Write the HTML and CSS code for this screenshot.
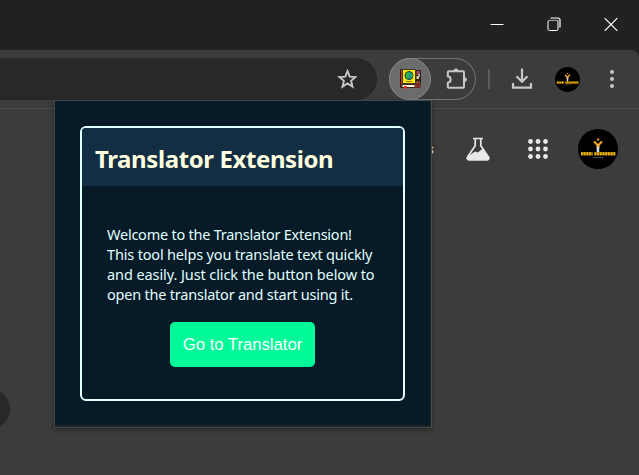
FILE: index.html
```html
<!DOCTYPE html>
<html lang="en">
<head>
<meta charset="utf-8">
<title>Translator Extension</title>
<link rel="stylesheet" href="styles.css">
</head>
<body>
<svg class="defs" width="0" height="0">
  <symbol id="avatar" viewBox="0 0 40 40">
    <circle cx="20" cy="20" r="20" fill="#000"/>
    <circle cx="20" cy="10.500" r="1.500" fill="#a87224"/>
    <path d="M16 12.500l4 4 4-4" fill="none" stroke="#f0a51c" stroke-width="2.200"/>
    <path d="M20 15v4" stroke="#f0b040" stroke-width="3"/>
    <path d="M20 18v5" stroke="#d5dfe8" stroke-width="2.500"/>
    <path d="M3 24.800h11.500m2 0h21" stroke="#7d5c08" stroke-width="3.600"/>
    <path d="M3 24.800h11.500m2 0h21" stroke="#f4b808" stroke-width="3" stroke-dasharray="1.700 1"/>
    <path d="M15 28.500h10" stroke="#555" stroke-width="1"/>
  </symbol>
</svg>
<div class="browser">
  <header class="titlebar">
    <svg class="win" width="14" height="14" viewBox="0 0 14 14"><path d="M.5 7.500h13" stroke="#fff"/></svg>
    <svg class="win" width="14" height="14" viewBox="0 0 14 14" fill="none"><path d="M3.500 1H11a2 2 0 0 1 2 2v7.500" stroke="#fff" stroke-width="1.200"/><rect x="1" y="3.500" width="10" height="10" rx="1.500" stroke="#fff"/><path d="M2.500 3.300H11v8.500" stroke="#999" stroke-width="1.200"/></svg>
    <svg class="win" width="14" height="14" viewBox="0 0 14 14"><path d="M.7 1.200l12.600 12.600M13.300 1.200L.7 13.800" stroke="#fff" stroke-width="1.200"/></svg>
  </header>
  <div class="toolbar">
    <div class="omnibox">
      <svg width="20" height="20" viewBox="0 0 20 20"><path d="M10.500 2.100l2.200 5.500 5.900.4-4.500 3.800 1.400 5.800-5-3.200-5 3.200 1.400-5.800L2.400 8l5.900-.4z" fill="none" stroke="#c7c7c7" stroke-width="1.900"/></svg>
    </div>
    <div class="extensions">
      <div class="ext-active">
        <svg class="book" width="22" height="22" viewBox="0 0 22 22">
          <path d="M15 2h6v14h-6z" fill="#25211f"/>
          <path d="M16.500 3h3.500v4h-3.500z" fill="#a3475a"/><path d="M16.500 8h2.500v3h-2.500z" fill="#e7c8a0"/><path d="M18 6h2v3h-2z" fill="#aaa"/><path d="M16 13h4v3h-4z" fill="#87412c"/>
          <path d="M.5 1.500h2v18h-2z" fill="#c83b25" stroke="#29201b"/>
          <path d="M2.500 1.500h13v14h-13z" fill="#ffe70d" stroke="#40380f"/>
          <circle cx="9" cy="7.500" r="4" fill="#1692aa" stroke="#163a48"/>
          <path d="M6 5l3-1 1 2-2 1 1 2-1 2-2-2zM11 5l2 2-1 3-1-1z" fill="#3fb12d"/>
          <path d="M6 13.500h6" stroke="#967c08"/>
          <path d="M2 16.500h18v3H2z" fill="#fff3df" stroke="#3b251b"/>
          <path d="M14 16.500h6v3h-5z" fill="#8d2f26"/><path d="M4 18h3v3.500L5.500 20 4 21z" fill="#e82d24"/>
        </svg>
      </div>
      <svg class="puzzle" width="22" height="22" viewBox="0 0 22 22"><path d="M1.800 4.300c0-.7.400-1.100 1.100-1.100H17c.7 0 1 .4 1 1v14.600c0 .7-.4 1-1 1H2.900c-.7 0-1.100-.3-1.100-1v-4c3.800-.5 3.800-6 0-6.600z" fill="none" stroke="#c7c7c7" stroke-width="2"/><path d="M7.500 3a2.500 2.500 0 0 1 5 0zM18.500 9a2.500 2.500 0 0 1 0 5z" fill="#c7c7c7"/></svg>
    </div>
    <div class="divider"></div>
    <svg class="download" width="22" height="22" viewBox="0 0 22 22"><path d="M11 .5v13M5.500 8.300L11 13.800l5.500-5.500M2 15v4.700h18V15" fill="none" stroke="#c7c7c7" stroke-width="2.200"/></svg>
    <svg class="profile" width="25" height="25"><use href="#avatar"/></svg>
    <svg class="kebab" width="6" height="20" viewBox="0 0 6 20" fill="#c7c7c7"><circle cx="3" cy="3" r="2"/><circle cx="3" cy="10" r="2"/><circle cx="3" cy="17" r="2"/></svg>
  </div>
  <main class="page">
    <div class="page-nav">
      <span class="link">Images</span>
      <svg class="flask" width="24" height="24" viewBox="0 0 24 24"><path d="M7 1.500h10M9.200 1.500v7.200L1.600 20c-1 1.500-.2 2.800 1.300 2.800h18.200c1.500 0 2.300-1.300 1.300-2.800L14.800 8.700V1.500" fill="none" stroke="#e8e8e8" stroke-width="1.700"/><path d="M5.200 17l4-2.500 2.500 1 5.500-4.200L22.500 20c.7 1.500 0 2.500-1.400 2.500H2.900C1.500 22.500.8 21.500 1.700 20z" fill="#e8e8e8"/></svg>
      <svg class="apps" width="20" height="20" viewBox="0 0 20 20" fill="#e8e8e8"><circle cx="2.500" cy="2.500" r="2.400"/><circle cx="10" cy="2.500" r="2.400"/><circle cx="17.500" cy="2.500" r="2.400"/><circle cx="2.500" cy="10" r="2.400"/><circle cx="10" cy="10" r="2.400"/><circle cx="17.500" cy="10" r="2.400"/><circle cx="2.500" cy="17.500" r="2.400"/><circle cx="10" cy="17.500" r="2.400"/><circle cx="17.500" cy="17.500" r="2.400"/></svg>
      <svg width="40" height="40"><use href="#avatar"/></svg>
    </div>
    <div class="shortcut"></div>
  </main>
  <section class="popup">
    <div class="card">
      <h1>Translator Extension</h1>
      <div class="content">
        <p><span class="l1">Welcome to the Translator Extension!</span><br><span class="l2">This tool helps you translate text quickly</span><br><span class="l3">and easily. Just click the button below to</span><br><span class="l4">open the translator and start using it.</span></p>
        <button>Go to Translator</button>
      </div>
    </div>
  </section>
</div>
</body>
</html>
```
FILE: styles.css
```css
* { box-sizing: border-box; }
body { margin: 0; background: #202221; }
svg { display: block; flex: none; }
.defs { position: absolute; }
.browser { position: relative; width: 639px; height: 475px; overflow: hidden; display: flex; flex-direction: column; }
.titlebar { height: 50px; flex: none; display: flex; justify-content: flex-end; gap: 43px; padding: 17px 21px 0 0; background: #202221; }
.toolbar { height: 59px; flex: none; display: flex; align-items: center; background: #3c3c3c; border-bottom: 1px solid #4a4a4a; border-top-right-radius: 8px; }
.omnibox { width: 377px; height: 42px; border-radius: 0 21px 21px 0; background: #282828; display: flex; align-items: center; justify-content: flex-end; padding-right: 20px; }
.extensions { width: 87px; height: 42px; margin-left: 12px; border-radius: 21px; display: flex; align-items: center; box-shadow: inset 0 0 0 1px #757575; }
.ext-active { width: 42px; height: 42px; border-radius: 50%; background: #6c6c6c; border: 1px solid #858585; display: flex; align-items: center; justify-content: center; }
.book { margin-left: 2px; }
.puzzle { margin-left: 15px; }
.divider { width: 2px; height: 20px; margin-left: 12px; background: #5b5b5b; }
.download { margin-left: 21px; }
.profile { margin-left: 22px; }
.kebab { margin-left: 29px; }
.page { flex: 1; background: #3c3c3c; }
.page-nav { height: 80px; display: flex; align-items: center; justify-content: flex-end; padding-right: 21px; }
.link { font: 14px Roboto, sans-serif; color: #e8e8e8; margin-right: 32px; }
.flask { margin-right: 38px; }
.apps { margin-right: 30px; }
.shortcut { width: 40px; height: 40px; margin: 200px 0 0 -30px; border-radius: 50%; background: #282828; }
.popup { position: absolute; left: 54px; top: 100px; width: 378px; height: 328px; padding: 25px; background: #071a27; border: 1px solid #414545; border-right-color: #4a4a4a; box-shadow: inset 0 -2px #222323, inset -1px 0 #222323, 0 2px 5px #0005; }
.card { width: 325px; height: 275px; border: 2px solid #e0ffff; border-radius: 6px; overflow: hidden; font-family: "Noto Sans", sans-serif; }
h1 { margin: 0; height: 58px; padding-left: 13px; background: #132e42; color: #ffffe0; font-size: 24px; line-height: 62px; font-weight: 700; letter-spacing: -.4px; white-space: nowrap; }
.content { display: flex; flex-direction: column; align-items: center; padding: 38px 20px 0 25px; }
p { margin: 0; align-self: stretch; font-size: 14.5px; line-height: 20px; color: #e0ffff; white-space: nowrap; }
button { width: 145px; height: 45px; margin: 18px 5px 0 0; padding: 0; border: 0; border-radius: 5px; background: #00fa9a; color: #fff; font: 16.67px "Liberation Sans", sans-serif; }
.l1 { letter-spacing: -.24px; }
.l2 { letter-spacing: -.17px; }
.l3 { letter-spacing: -.09px; }
.l4 { letter-spacing: -.22px; }
```
